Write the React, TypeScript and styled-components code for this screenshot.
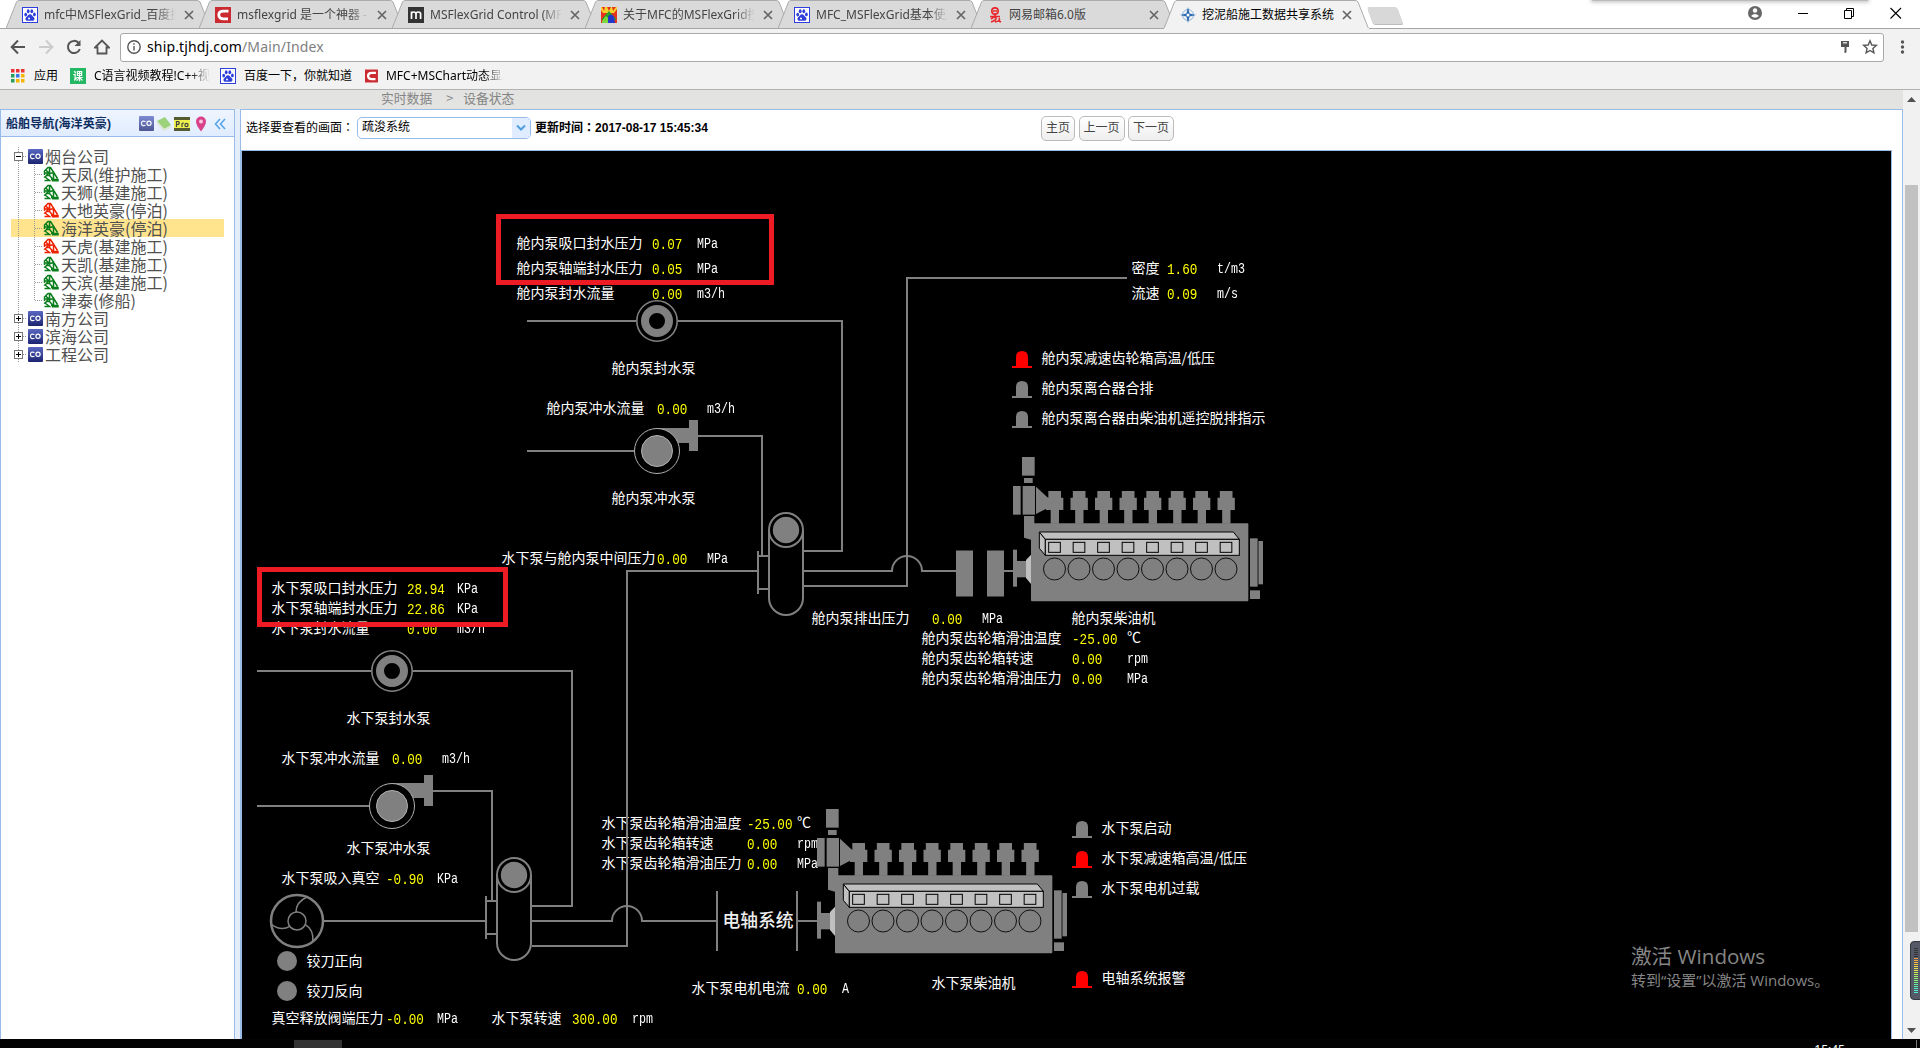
import React from "react";
import styled, { createGlobalStyle } from "styled-components";

const UI = `"Noto Sans", "Noto Sans CJK SC", sans-serif`;
const CJK = `"Noto Sans CJK SC", sans-serif`;
const ARIAL = `"Liberation Sans", "Noto Sans CJK SC", sans-serif`;
const GREY = "#808080";
const EDGE = "#99bbe8";

const Global = createGlobalStyle`
  * { box-sizing: border-box; }
  html, body { margin: 0; background: #fff; overflow: hidden; }
`;

const Screen = styled.div`
  position: relative;
  display: flex;
  flex-direction: column;
  width: 1920px;
  height: 1048px;
  overflow: hidden;
  font-family: ${UI};
  background: #fff;
`;

/* ---------- browser chrome ---------- */

const TabStrip = styled.div`
  display: flex;
  height: 29px;
  padding-left: 6px;
  background: linear-gradient(#fff, #fff 28px, #a6a6a6 28px);
`;

const TabBox = styled.div<{ $active?: boolean }>`
  position: relative;
  flex: none;
  display: flex;
  align-items: center;
  width: 205px;
  height: 29px;
  margin-right: -12px;
  padding-left: 16px;
  z-index: ${(p) => (p.$active ? 2 : 1)};
`;

const TabShape = styled.svg`
  position: absolute;
  left: 0;
  top: 0;
`;

const TabIcon = styled.span`
  position: relative;
  display: flex;
  width: 16px;
  height: 16px;
  margin-right: 6px;
`;

const TabTitle = styled.span<{ $active?: boolean; $fade?: boolean }>`
  position: relative;
  width: 134px;
  overflow: hidden;
  white-space: nowrap;
  font-size: 12px;
  line-height: 18px;
  color: ${(p) => (p.$active ? "#000" : "#444")};
  ${(p) => p.$fade && "mask-image: linear-gradient(to right, #000 112px, transparent 132px);"}
`;

const TabClose = styled.svg`
  position: relative;
  margin-left: 6px;
`;

const NewTab = styled.div`
  align-self: flex-start;
  width: 30px;
  height: 17px;
  margin: 7px 0 0 13px;
  background: #d8d8d8;
  border-radius: 2px;
  transform: skewX(20deg);
  box-shadow: 0 1px 0 #bbb;
`;

const WindowButtons = styled.div`
  display: flex;
  align-items: center;
  justify-content: space-between;
  width: 155px;
  height: 26px;
  margin-left: auto;
  margin-right: 17px;
`;

const TopShadow = styled.div`
  position: absolute;
  left: 1592px;
  top: -6px;
  width: 276px;
  height: 7px;
  background: #bbb;
  box-shadow: 0 0 4px 1px #bbb;
`;

const Toolbar = styled.div`
  display: flex;
  align-items: center;
  height: 36px;
  padding: 0 11px 0 10px;
  background: #f2f2f2;
`;

const NavIcons = styled.div`
  display: flex;
  gap: 12px;
  width: 110px;
`;

const Omnibox = styled.div`
  display: flex;
  align-items: center;
  width: 1764px;
  height: 29px;
  padding: 0 5px 0 6px;
  border: 1px solid #a9a9a9;
  border-radius: 3px;
  background: #fff;
`;

const Url = styled.span`
  flex: 1;
  margin-left: 6px;
  font-size: 14px;
  line-height: 20px;
  letter-spacing: 0.15px;
  color: #000;
`;

const UrlPath = styled.span`
  color: #808080;
`;

const OmniActions = styled.div`
  display: flex;
  gap: 9px;
`;

const MenuDots = styled.svg`
  margin-left: 16px;
`;

const Bookmarks = styled.div`
  display: flex;
  align-items: center;
  height: 25px;
  padding: 0 0 3px 10px;
  background: #f2f2f2;
  border-bottom: 1px solid #b2b2b2;
`;

const Bookmark = styled.div<{ $w: number; $fade?: boolean }>`
  display: flex;
  align-items: center;
  gap: 8px;
  width: ${(p) => p.$w}px;
  overflow: hidden;
  white-space: nowrap;
  font-size: 12px;
  line-height: 18px;
  color: #000;
  ${(p) => p.$fade && `mask-image: linear-gradient(to right, #000 ${p.$w - 30}px, transparent ${p.$w - 10}px);`}
`;

const GreenTile = styled.span`
  width: 16px;
  height: 16px;
  flex: none;
  background: #25b864;
  color: #fff;
  font: bold 10px/15px ${CJK};
  text-align: center;
`;

/* ---------- page ---------- */

const Page = styled.div`
  display: flex;
  height: 949px;
`;

const Site = styled.div`
  display: flex;
  flex-direction: column;
  width: 1903px;
`;

const Crumbs = styled.div`
  display: flex;
  height: 19px;
  padding-left: 381px;
  background: #e3e3e1;
  font: 12.8px/16px ${CJK};
  color: #858585;
`;

const CrumbArrow = styled.span`
  width: 31px;
  padding-left: 4px;
  text-align: center;
`;

const Columns = styled.div`
  display: flex;
  gap: 5px;
  flex: 1;
  background: #e4edfa;
`;

const Sidebar = styled.div`
  width: 235px;
  border: 1px solid ${EDGE};
  border-bottom: 0;
  background: #fff;
`;

const SideHead = styled.div`
  display: flex;
  align-items: center;
  height: 27px;
  padding: 2px 7px 0 5px;
  border-bottom: 1px solid ${EDGE};
  background: linear-gradient(#eff5ff, #e0ecff);
  font: bold 12px/18px ${ARIAL};
  letter-spacing: 0.1px;
  color: #0e2d5f;
`;

const SideTools = styled.div`
  display: flex;
  gap: 2px;
  margin-left: auto;
`;

const Tree = styled.div`
  padding: 10px 10px 0 10px;
`;

const TreeRow = styled.div<{ $on?: boolean }>`
  display: flex;
  align-items: center;
  height: 18px;
  background: ${(p) => (p.$on ? "#ffe48d" : "transparent")};
  font: 16px/18px ${CJK};
  color: #505050;
  white-space: nowrap;
`;

const TreeText = styled.span`
  margin-left: 2px;
  padding-bottom: 1px;
`;

const Work = styled.div`
  display: flex;
  flex-direction: column;
  width: 1663px;
  border: 1px solid ${EDGE};
  border-bottom: 0;
  background: #fff;
`;

const Controls = styled.div`
  display: flex;
  align-items: center;
  height: 40px;
  padding: 0 0 4px 5px;
  font: 12px/18px ${ARIAL};
  color: #000;
`;

const Prompt = styled.span`
  padding-bottom: 2px;
`;

const Colon = styled.span`
  font-family: "Noto Sans CJK TC", sans-serif;
`;

const Select = styled.div`
  display: flex;
  justify-content: space-between;
  width: 174px;
  height: 22px;
  margin: 0 4px 0 3px;
  padding-left: 4px;
  border: 1px solid ${EDGE};
  border-radius: 5px;
  overflow: hidden;
  line-height: 18px;
`;

const SelectArrow = styled.span`
  display: flex;
  align-items: center;
  justify-content: center;
  width: 18px;
  background: #e0ecff;
`;

const Updated = styled.strong`
  width: 506px;
  padding-bottom: 2px;
  white-space: nowrap;
`;

const PageButton = styled.button<{ $w: number }>`
  width: ${(p) => p.$w}px;
  height: 25px;
  margin-right: 3.5px;
  padding: 0 0 2px;
  border: 1px solid #bbb;
  border-radius: 5px;
  background: linear-gradient(#fff, #eee);
  font: 12px/20px ${CJK};
  color: #444;
`;

const Canvas = styled.div`
  position: relative;
  width: 1651px;
  height: 889px;
  border-left: 1px solid ${EDGE};
  border-right: 1px solid ${EDGE};
  border-top: 1px solid ${EDGE};
  background: #000;
  overflow: hidden;
`;

const Drawing = styled.svg`
  position: absolute;
  left: 0;
  top: 0;
`;

const Label = styled.span<{ $x: number; $y: number }>`
  position: absolute;
  left: ${(p) => p.$x - 241.5}px;
  top: ${(p) => p.$y - 162}px;
  font: 14px/20px ${CJK};
  color: #fff;
  white-space: pre;
`;

const Unit = styled(Label)<{ $wide?: boolean }>`
  font: 14px/20px "Liberation Mono", "Noto Sans CJK SC", monospace;
  transform: scaleX(${(p) => (p.$wide ? 1 : 0.8333)});
  transform-origin: 0 0;
`;

const Value = styled(Label)`
  font: 15.5px/20px "Liberation Mono", monospace;
  transform: scaleX(0.815);
  transform-origin: 0 0;
  color: #ff0;
`;

const ShaftLabel = styled(Label)`
  font-size: 17.8px;
  font-weight: 500;
  color: #eee;
`;

const Marker = styled.div<{ $x: number; $y: number; $w: number; $h: number }>`
  position: absolute;
  left: ${(p) => p.$x - 242}px;
  top: ${(p) => p.$y - 151}px;
  width: ${(p) => p.$w}px;
  height: ${(p) => p.$h}px;
  border: 5px solid #ed1c24;
`;

const Watermark = styled.div`
  position: absolute;
  left: 1389px;
  top: 792px;
  color: #868686;
  font-family: "Open Sans", "Noto Sans CJK SC", sans-serif;
  white-space: nowrap;
`;

const WatermarkTitle = styled.div`
  font-size: 20.6px;
  line-height: 27px;
`;

const WatermarkText = styled.div`
  font-size: 15px;
  line-height: 21px;
`;

const Scrollbar = styled.div`
  display: flex;
  flex-direction: column;
  align-items: center;
  width: 17px;
  background: #f1f1f1;
`;

const ScrollArrow = styled.svg`
  flex: none;
  margin-top: 7px;
`;

const ScrollThumb = styled.div`
  flex: none;
  width: 13px;
  height: 747px;
  margin: 83px 0 89px;
  background: #c1c1c1;
`;

const Gauge = styled.div`
  position: absolute;
  left: 1910px;
  top: 941px;
  display: flex;
  flex-direction: column;
  gap: 1px;
  width: 14px;
  height: 59px;
  padding: 6px 0 0 3px;
  border: 1px solid #33353f;
  border-radius: 4px;
  background: #545867;
`;

const GaugeBar = styled.span<{ $c: string }>`
  width: 4px;
  height: 1px;
  background: ${(p) => p.$c};
`;

const Taskbar = styled.div`
  display: flex;
  height: 9px;
  padding: 1px 3px 0 294px;
  overflow: hidden;
  background: #030303;
`;

const TaskItem = styled.div`
  width: 48px;
  background: #333;
`;

const Clock = styled.div`
  margin: 2px 71px 0 auto;
  font: 12px/16px "Noto Sans", sans-serif;
  color: #fff;
`;

const ShowDesktop = styled.div`
  width: 1px;
  background: #777;
`;

/* ---------- icons ---------- */

const Paw = () => (
  <svg width="16" height="16" viewBox="0 0 16 16">
    <rect x=".5" y=".5" width="15" height="15" fill="#fff" stroke="#2f3fdc" />
    <g fill="#2f3fdc">
      <ellipse cx="3.7" cy="7.6" rx="1.4" ry="1.9" />
      <ellipse cx="6.2" cy="4.2" rx="1.4" ry="2" />
      <ellipse cx="9.8" cy="4.2" rx="1.4" ry="2" />
      <ellipse cx="12.4" cy="7.4" rx="1.4" ry="1.9" />
      <path d="M8 7.2c1.8 0 2.6 2 3.8 3.1 1.5 1.5.5 3.7-1.6 3.5-1.5-.2-2.9-.2-4.4 0-2.2.2-3.1-2-1.6-3.5C5.4 9.200 6.200 7.200 8 7.200z" />
    </g>
    <circle cx="7" cy="11.600" r="1" fill="#fff" />
  </svg>
);

const CIcon = () => (
  <svg width="16" height="16" viewBox="0 0 16 16">
    <rect width="16" height="16" fill="#ca2a30" />
    <path d="M13.500 4.200H8.500Q3.800 4.200 3.800 8T8.500 11.800H13" fill="none" stroke="#fff" strokeWidth="2.800" />
  </svg>
);

const MIcon = () => (
  <svg width="16" height="16" viewBox="0 0 16 16">
    <rect width="16" height="16" fill="#333" />
    <path d="M3.500 12V4.500M3.500 7Q3.500 5 5.700 5T8 7V12M8 7Q8 5 10.300 5T12.600 7V12" fill="none" stroke="#fff" strokeWidth="1.700" />
  </svg>
);

const HouseIcon = () => (
  <svg width="16" height="16" viewBox="0 0 16 16">
    <rect width="16" height="16" fill="#e8321e" />
    <path d="M0 0h1l2 4 1-4h2l2 4 2-4h1l1 4 3-4h1v2l-3 4H2L0 3z" fill="#f6d32d" />
    <path d="M1 12l7-8 7 8v1H1z" fill="#28a428" />
    <path d="M7 9.500q3-4 6 0l1 6.500H7z" fill="#2436c8" />
    <path d="M1 14l4-5 2 2v5H1z" fill="#7ada3a" />
  </svg>
);

const MailIcon = () => (
  <svg width="16" height="16" viewBox="0 0 16 16" fill="none" stroke="#e8282c" strokeWidth="1.700">
    <circle cx="8" cy="4" r="3.200" />
    <path d="M6 4h4M8 7v2M3 9.500h10M4 12q4-3 5-1t-5 4M8 15q6-1 4-4M12 14l2 1" />
  </svg>
);

const StarIcon = () => (
  <svg width="16" height="16" viewBox="0 0 16 16">
    <circle cx="8" cy="8" r="5.500" fill="none" stroke="#8db3dc" />
    <path d="M8 0l1.600 6.400L16 8 9.600 9.600 8 16 6.400 9.600 0 8l6.400-1.600z" fill="#2c6bb0" />
    <circle cx="8" cy="8" r="1.500" fill="#fff" />
  </svg>
);

const CoIcon = ({ faded }: { faded?: boolean }) => (
  <svg width="15" height="15" viewBox="0 0 15 15" opacity={faded ? 0.75 : 1}>
    <defs>
      <linearGradient id="co" x2="0" y2="1">
        <stop stopColor="#5a68c4" />
        <stop offset="1" stopColor="#1c2470" />
      </linearGradient>
    </defs>
    <rect width="15" height="15" rx="1" fill="url(#co)" />
    <path d="M6.500 5.500Q2.500 4 2.500 7.300T6.500 9.200" fill="none" stroke="#fff" strokeWidth="1.200" />
    <circle cx="10" cy="7.300" r="2.100" fill="none" stroke="#fff" strokeWidth="1.200" />
  </svg>
);

const ShipIcon = ({ color }: { color: string }) => (
  <svg width="16" height="16" viewBox="0 0 16 16" fill="none" stroke={color} strokeWidth="1.500">
    <path d="M1.500 9V5L5 1.500H7.500L14.500 12.500M6.500 2V9.500L10 13.500M1.500 7H5.500L7 4.500M3 4L5.500 7L3 10M7 7.500L10.500 6.500V13M1 11.500L4 9.500H7M2 11L6.500 14.500H1.500M8 13.500H15V14.800H9" />
  </svg>
);

const Toggle = ({ open }: { open?: boolean }) => (
  <svg width="17" height="18" viewBox="0 0 17 18" stroke="#555">
    <path d="M7.500 0V18" strokeDasharray="1 1" stroke="#999" />
    <path d="M12 9.500H16" strokeDasharray="1 1" stroke="#999" />
    <rect x="3.500" y="5.500" width="8" height="8" fill="#fff" stroke="#777" />
    <path d={open ? "M5 9.500H10" : "M5 9.500H10M7.500 7V12"} stroke="#000" />
  </svg>
);

const Branch = ({ last }: { last?: boolean }) => (
  <svg width="32" height="18" viewBox="0 0 32 18" stroke="#999" strokeDasharray="1 1">
    <path d="M7.500 0V18" />
    <path d={last ? "M23.500 0V9.500" : "M23.500 0V18"} />
    <path d="M24 9.500H32" />
  </svg>
);

/* ---------- diagram parts ---------- */

const cylinders = [0, 1, 2, 3, 4, 5, 6, 7];

const Engine = ({ x, y }: { x: number; y: number }) => (
  <g transform={`translate(${x} ${y}) scale(.33333)`} fill={GREY}>
    <rect x="126" y="651" width="38" height="56" />
    <rect x="132" y="714" width="26" height="15" />
    <rect x="99" y="738" width="23" height="86" />
    <rect x="128" y="738" width="37" height="86" />
    <path d="M168 740L207 776V802L168 822z" />
    <path d="M132 828H163V902L132 893z" />
    <rect x="153" y="850" width="652" height="234" rx="3" />
    {cylinders.map((i) => (
      <path key={i} transform={`translate(${i * 73.500} 0)`} d="M205 753H243V773H250V810H237V851H212V810H198V773H205z" />
    ))}
    <g fill="#c0c0c0" stroke="#000" strokeWidth="3">
      <path d="M178 876L196 898V946L178 925z" />
      <path d="M178 876H760L778 898H196z" />
      <rect x="196" y="898" width="582" height="48" />
      {cylinders.map((i) => (
        <rect key={i} x={206 + i * 73.500} y="907" width="35" height="30" />
      ))}
    </g>
    <g fill="none" stroke="#111" strokeWidth="3">
      {cylinders.map((i) => (
        <circle key={i} cx={223.500 + i * 73.500} cy="987" r="33" />
      ))}
    </g>
    <rect x="810" y="895" width="23" height="145" />
    <rect x="833" y="903" width="3" height="130" fill="#444" />
    <rect x="836" y="903" width="13" height="130" />
    <rect x="810" y="1051" width="30" height="26" />
    <rect x="99" y="929" width="12" height="111" />
    <rect x="111" y="963" width="28" height="49" />
    <path d="M138 960L153 944V1032L138 1014z" fill="#c0c0c0" />
  </g>
);

const SealPump = ({ x, y }: { x: number; y: number }) => (
  <g fill="none" stroke={GREY}>
    <circle cx={x} cy={y} r="20.200" strokeWidth="1.600" />
    <circle cx={x} cy={y} r="12" strokeWidth="8" />
  </g>
);

const FlushPump = ({ x, y }: { x: number; y: number }) => (
  <g transform={`translate(${x} ${y})`}>
    <path d="M0-23H32V-31H41V0H32V-8H20z" fill={GREY} />
    <circle r="22.500" fill="#000" stroke="#b0b0b0" />
    <circle r="15.500" fill={GREY} stroke="#b0b0b0" />
  </g>
);

const MainPump = ({ x, y }: { x: number; y: number }) => (
  <g transform={`translate(${x} ${y})`} fill="none" stroke={GREY} strokeWidth="2">
    <circle r="17" />
    <circle r="13.200" fill={GREY} stroke="none" />
    <path d="M-17 0V68A17 17 0 0 0 17 68V0M-28 21V64M-28 26H-17M-28 59H-17" />
  </g>
);

const Lamp = ({ x, y, on }: { x: number; y: number; on?: boolean }) => (
  <path
    transform={`translate(${x} ${y})`}
    d="M0 17V15H4V6Q4 0 10 0T16 6V15H20V17z"
    fill={on ? "#f00" : GREY}
  />
);

const Cutter = () => (
  <g transform="translate(297 921)" fill="none" stroke={GREY} strokeWidth="1.500">
    <circle r="26" strokeWidth="2.500" />
    <circle r="9" />
    {[0, 120, 240].map((a) => (
      <path key={a} transform={`rotate(${a})`} d="M-1-9Q-1-19 10-24" />
    ))}
  </g>
);

type Row = { name: string; x: number; y: number; value: string; vx: number; unit: string; ux: number };

const readings: Row[] = [
  { name: "舱内泵吸口封水压力", x: 516, y: 243, value: "0.07", vx: 651.500, unit: "MPa", ux: 696.500 },
  { name: "舱内泵轴端封水压力", x: 516, y: 268, value: "0.05", vx: 651.500, unit: "MPa", ux: 696.500 },
  { name: "舱内泵封水流量", x: 516, y: 293, value: "0.00", vx: 651.500, unit: "m3/h", ux: 696.500 },
  { name: "舱内泵冲水流量", x: 546, y: 408, value: "0.00", vx: 656.500, unit: "m3/h", ux: 706.500 },
  { name: "密度", x: 1131, y: 268, value: "1.60", vx: 1166.500, unit: "t/m3", ux: 1216.500 },
  { name: "流速", x: 1131, y: 293, value: "0.09", vx: 1166.500, unit: "m/s", ux: 1216.500 },
  { name: "水下泵与舱内泵中间压力", x: 501, y: 558, value: "0.00", vx: 656.500, unit: "MPa", ux: 706.500 },
  { name: "舱内泵排出压力", x: 811, y: 618, value: "0.00", vx: 931.500, unit: "MPa", ux: 981.500 },
  { name: "舱内泵齿轮箱滑油温度", x: 921, y: 638, value: "-25.00", vx: 1071, unit: "℃", ux: 1126.500 },
  { name: "舱内泵齿轮箱转速", x: 921, y: 658, value: "0.00", vx: 1071.500, unit: "rpm", ux: 1126.500 },
  { name: "舱内泵齿轮箱滑油压力", x: 921, y: 678, value: "0.00", vx: 1071.500, unit: "MPa", ux: 1126.500 },
  { name: "水下泵吸口封水压力", x: 271, y: 588, value: "28.94", vx: 406.500, unit: "KPa", ux: 456.500 },
  { name: "水下泵轴端封水压力", x: 271, y: 608, value: "22.86", vx: 406.500, unit: "KPa", ux: 456.500 },
  { name: "水下泵封水流量", x: 271, y: 628, value: "0.00", vx: 406.500, unit: "m3/h", ux: 456.500 },
  { name: "水下泵冲水流量", x: 281, y: 758, value: "0.00", vx: 391.500, unit: "m3/h", ux: 441.500 },
  { name: "水下泵吸入真空", x: 281, y: 878, value: "-0.90", vx: 385.500, unit: "KPa", ux: 436.500 },
  { name: "真空释放阀端压力", x: 271, y: 1018, value: "-0.00", vx: 385.500, unit: "MPa", ux: 436.500 },
  { name: "水下泵转速", x: 491, y: 1018, value: "300.00", vx: 571.500, unit: "rpm", ux: 631.500 },
  { name: "水下泵齿轮箱滑油温度", x: 601, y: 823, value: "-25.00", vx: 746, unit: "℃", ux: 796.500 },
  { name: "水下泵齿轮箱转速", x: 601, y: 843, value: "0.00", vx: 746.500, unit: "rpm", ux: 796.500 },
  { name: "水下泵齿轮箱滑油压力", x: 601, y: 863, value: "0.00", vx: 746.500, unit: "MPa", ux: 796.500 },
  { name: "水下泵电机电流", x: 691, y: 988, value: "0.00", vx: 796.500, unit: "A", ux: 841.500 },
];

const captions: [string, number, number][] = [
  ["舱内泵封水泵", 611, 368],
  ["舱内泵冲水泵", 611, 498],
  ["舱内泵柴油机", 1071, 618],
  ["水下泵封水泵", 346, 718],
  ["水下泵冲水泵", 346, 848],
  ["水下泵柴油机", 931, 983],
  ["铰刀正向", 306, 961],
  ["铰刀反向", 306, 991],
];

const alarms: { text: string; x: number; y: number; on?: boolean }[] = [
  { text: "舱内泵减速齿轮箱高温/低压", x: 1012, y: 351, on: true },
  { text: "舱内泵离合器合排", x: 1012, y: 381 },
  { text: "舱内泵离合器由柴油机遥控脱排指示", x: 1012, y: 411 },
  { text: "水下泵启动", x: 1072, y: 821 },
  { text: "水下泵减速箱高温/低压", x: 1072, y: 851, on: true },
  { text: "水下泵电机过载", x: 1072, y: 881 },
  { text: "电轴系统报警", x: 1072, y: 971, on: true },
];

const Diagram = () => (
  <Canvas>
    {readings.map((r) => (
      <React.Fragment key={r.name}>
        <Label $x={r.x} $y={r.y}>{r.name}</Label>
        <Value $x={r.vx} $y={r.y + 3}>{r.value}</Value>
        <Unit $x={r.ux} $y={r.unit === "℃" ? r.y + 1 : r.y + 2} $wide={r.unit === "℃"}>{r.unit}</Unit>
      </React.Fragment>
    ))}
    {captions.map(([text, x, y]) => (
      <Label key={text} $x={x} $y={y}>{text}</Label>
    ))}
    {alarms.map((a) => (
      <Label key={a.text} $x={a.x + 29} $y={a.y + 7}>{a.text}</Label>
    ))}
    <ShaftLabel $x={722} $y={920}>电轴系统</ShaftLabel>
    <Drawing width="1649" height="888" viewBox="242 151 1649 888">
      <g fill="none" stroke={GREY} strokeWidth="2">
        <path d="M527 321H636M678 321H842V551H804" />
        <path d="M527 451H634M698 436H762V556" />
        <path d="M1127 278H907V586H804" />
        <path d="M804 571H892A15 15 0 0 1 922 571H956M1004 571H1013" />
        <path d="M758 571H627V946H532" />
        <path d="M257 671H371M413 671H572V906H532" />
        <path d="M257 806H369M433 791H492V901" />
        <path d="M324 921H486M532 921H612A15 15 0 0 1 642 921H717M717 891V951M797 891V951M797 921H817" />
      </g>
      <rect x="956" y="550.500" width="17" height="46" fill={GREY} />
      <rect x="987" y="550.500" width="17" height="46" fill={GREY} />
      <SealPump x={657} y={321} />
      <SealPump x={392} y={671} />
      <FlushPump x={657} y={451} />
      <FlushPump x={392} y={806} />
      <MainPump x={786} y={530} />
      <MainPump x={514} y={875} />
      <Engine x={980} y={240} />
      <Engine x={784} y={592} />
      <Cutter />
      <circle cx="287" cy="961" r="10" fill={GREY} />
      <circle cx="287" cy="991" r="10" fill={GREY} />
      {alarms.map((a) => (
        <Lamp key={a.text} x={a.x} y={a.y} on={a.on} />
      ))}
    </Drawing>
    <Marker $x={496} $y={214} $w={278} $h={71} />
    <Marker $x={257} $y={567} $w={251} $h={60} />
    <Watermark>
      <WatermarkTitle>激活 Windows</WatermarkTitle>
      <WatermarkText>转到“设置”以激活 Windows。</WatermarkText>
    </Watermark>
  </Canvas>
);

const tabs = [
  { title: "mfc中MSFlexGrid_百度搜", icon: <Paw />, fade: true },
  { title: "msflexgrid 是一个神器 - ", icon: <CIcon />, fade: true },
  { title: "MSFlexGrid Control (MFC", icon: <MIcon />, fade: true },
  { title: "关于MFC的MSFlexGrid控", icon: <HouseIcon />, fade: true },
  { title: "MFC_MSFlexGrid基本使用", icon: <Paw />, fade: true },
  { title: "网易邮箱6.0版", icon: <MailIcon /> },
  { title: "挖泥船施工数据共享系统", icon: <StarIcon />, active: true },
];

const ships: [string, string, boolean?][] = [
  ["天凤(维护施工)", "#0a7d1c"],
  ["天狮(基建施工)", "#0a7d1c"],
  ["大地英豪(停泊)", "#ee2200"],
  ["海洋英豪(停泊)", "#0a7d1c", true],
  ["天虎(基建施工)", "#ee2200"],
  ["天凯(基建施工)", "#0a7d1c"],
  ["天滨(基建施工)", "#0a7d1c"],
  ["津泰(修船)", "#0a7d1c"],
];

const gaugeColors = [
  "#333", "#333", "#333", "#333", "#333", "#f0a040", "#f0a840", "#f0b840", "#f0c840", "#e8d848", "#e8e050", "#e0e850",
  "#d0f050", "#b8f060", "#a8f068", "#98f070", "#88f078", "#70f088", "#60f098", "#58f0b0", "#50f0c0", "#50f0d0", "#50f0d8",
];

export default function App() {
  return (
    <Screen>
      <Global />
      <TabStrip>
        {tabs.map((t) => (
          <TabBox key={t.title} $active={t.active}>
            <TabShape width="205" height="29" viewBox="0 0 205 29">
              <path
                d="M0 28.500L10.500 2Q11.500.5 13 .5H191Q193 .5 194 2L204.500 28.500"
                fill={t.active ? "#f2f2f2" : "#dadada"}
                stroke="#ababab"
              />
              {t.active ? <path d="M0 28.500H205" stroke="#f2f2f2" /> : <path d="M0 28.500H205" stroke="#a6a6a6" />}
            </TabShape>
            <TabIcon>{t.icon}</TabIcon>
            <TabTitle $active={t.active} $fade={t.fade}>{t.title}</TabTitle>
            <TabClose width="10" height="10" viewBox="0 0 10 10" stroke="#666" strokeWidth="1.700">
              <path d="M1 1L9 9M9 1L1 9" />
            </TabClose>
          </TabBox>
        ))}
        <NewTab />
        <WindowButtons>
          <svg width="14" height="14" viewBox="0 0 14 14">
            <circle cx="7" cy="7" r="7" fill="#666" />
            <circle cx="7" cy="4.500" r="2.200" fill="#fff" />
            <path d="M3 10q4-4 8 0q-4 3.500-8 0" fill="#fff" />
          </svg>
          <svg width="14" height="14" viewBox="0 0 14 14"><path d="M3 7.500H13" stroke="#000" /></svg>
          <svg width="14" height="14" viewBox="0 0 14 14" fill="none" stroke="#000">
            <path d="M2.500 4.500H9.500V12.500H2.500zM4.500 4V2.500H11.500V10.500H10" />
          </svg>
          <svg width="14" height="14" viewBox="0 0 14 14" stroke="#000" strokeWidth="1.100">
            <path d="M1.500 2L12 12.500M12 2L1.500 12.500" />
          </svg>
        </WindowButtons>
      </TabStrip>
      <TopShadow />
      <Toolbar>
        <NavIcons>
          <svg width="16" height="16" viewBox="0 0 16 16" fill="none" stroke="#555" strokeWidth="2"><path d="M15 8H2.500M8 1.500L1.700 8 8 14.500" /></svg>
          <svg width="16" height="16" viewBox="0 0 16 16" fill="none" stroke="#ccc" strokeWidth="2"><path d="M1 8H13.500M8 1.500L14.300 8 8 14.500" /></svg>
          <svg width="16" height="16" viewBox="0 0 16 16" fill="none" stroke="#555" strokeWidth="2"><path d="M13.800 10A6.100 6.100 0 1 1 12.500 3.800" /><path d="M14.500 1V7H8.500z" fill="#555" stroke="none" /></svg>
          <svg width="16" height="16" viewBox="0 0 16 16" fill="none" stroke="#555" strokeWidth="1.800"><path d="M1 8.500L8 1.500 15 8.500H12.500V14.500H3.500V8.500z" /></svg>
        </NavIcons>
        <Omnibox>
          <svg width="14" height="14" viewBox="0 0 14 14" fill="none" stroke="#555" strokeWidth="1.400"><circle cx="7" cy="7" r="6.200" /><path d="M7 6V10.500M7 3.300V4.800" /></svg>
          <Url>ship.tjhdj.com<UrlPath>/Main/Index</UrlPath></Url>
          <OmniActions>
            <svg width="16" height="16" viewBox="0 0 16 16"><path d="M4 2h8v6H9.500V13L8.500 14H7.500V8H4z" fill="#555" /><path d="M6 3.800H10" stroke="#fff" strokeWidth="1.200" /></svg>
            <svg width="16" height="16" viewBox="0 0 16 16" fill="none" stroke="#555" strokeWidth="1.400"><path d="M8 1.800L9.800 6l4.500.4-3.400 3 1 4.400L8 11.500l-3.900 2.300 1-4.400-3.400-3L6.200 6z" /></svg>
          </OmniActions>
        </Omnibox>
        <MenuDots width="5" height="16" viewBox="0 0 5 16" fill="#555"><circle cx="2.500" cy="3" r="1.700" /><circle cx="2.500" cy="8" r="1.700" /><circle cx="2.500" cy="13" r="1.700" /></MenuDots>
      </Toolbar>
      <Bookmarks>
        <Bookmark $w={60}>
          <svg width="16" height="16" viewBox="0 0 16 16">
            {["#e33", "#e33", "#e33", "#2a9d58", "#3b78e7", "#f4b400", "#2a9d58", "#f4b400", "#f4b400"].map((c, i) => (
              <rect key={i} x={1 + (i % 3) * 5} y={1 + Math.floor(i / 3) * 5} width="3.500" height="3.500" fill={c} />
            ))}
          </svg>
          应用
        </Bookmark>
        <Bookmark $w={150} $fade><GreenTile>课</GreenTile>C语言视频教程!C++视频</Bookmark>
        <Bookmark $w={145}><Paw />百度一下，你就知道</Bookmark>
        <Bookmark $w={149} $fade><CIcon />MFC+MSChart动态显示</Bookmark>
      </Bookmarks>
      <Page>
        <Site>
          <Crumbs>实时数据<CrumbArrow>&gt;</CrumbArrow>设备状态</Crumbs>
          <Columns>
            <Sidebar>
              <SideHead>
                船舶导航(海洋英豪)
                <SideTools>
                  <CoIcon faded />
                  <svg width="16" height="16" viewBox="0 0 16 16"><path d="M1 5L9 1 15 9 8 14z" fill="#9bd27a" /><path d="M1 6.500L8 14 15 10.500" fill="none" stroke="#dfe8da" strokeWidth="2" /></svg>
                  <svg width="16" height="16" viewBox="0 0 16 16"><rect y="1" width="16" height="14" fill="#555a30" /><rect y="4" width="16" height="8" fill="#eef04c" /><path d="M2.500 11V5.500H4.500Q6 7 4.500 8.500H2.500M8 11V7.500Q8 7 10 7" fill="none" stroke="#444" strokeWidth="1.200" /><circle cx="12.500" cy="9" r="1.600" fill="none" stroke="#444" strokeWidth="1.200" /></svg>
                  <svg width="17" height="16" viewBox="0 0 17 16"><path d="M9 15.500Q4 9 4 5.500A5 5 0 0 1 14 5.500Q14 9 9 15.500z" fill="#d9418a" /><circle cx="9" cy="5.500" r="2" fill="#f7c7de" /></svg>
                  <svg width="16" height="16" viewBox="0 0 16 16" fill="none" stroke="#56a5e8" strokeWidth="1.600"><path d="M9 3L4.500 8 9 13M14 3L9.500 8 14 13" /></svg>
                </SideTools>
              </SideHead>
              <Tree>
                <TreeRow><Toggle open /><CoIcon /><TreeText>烟台公司</TreeText></TreeRow>
                {ships.map(([name, color, on], i) => (
                  <TreeRow key={name} $on={on}>
                    <Branch last={i === ships.length - 1} />
                    <ShipIcon color={color} />
                    <TreeText>{name}</TreeText>
                  </TreeRow>
                ))}
                {["南方公司", "滨海公司", "工程公司"].map((n) => (
                  <TreeRow key={n}><Toggle /><CoIcon /><TreeText>{n}</TreeText></TreeRow>
                ))}
              </Tree>
            </Sidebar>
            <Work>
              <Controls>
                <Prompt>选择要查看的画面<Colon>：</Colon></Prompt>
                <Select>
                  疏浚系统
                  <SelectArrow><svg width="12" height="8" viewBox="0 0 12 8" fill="none" stroke="#4f9fe0" strokeWidth="2"><path d="M2 1.500L6 5.500 10 1.500" /></svg></SelectArrow>
                </Select>
                <Updated>更新时间<Colon>：</Colon>2017-08-17 15:45:34</Updated>
                <PageButton $w={34}>主页</PageButton>
                <PageButton $w={46}>上一页</PageButton>
                <PageButton $w={46}>下一页</PageButton>
              </Controls>
              <Diagram />
            </Work>
          </Columns>
        </Site>
        <Scrollbar>
          <ScrollArrow width="9" height="5" viewBox="0 0 9 5"><path d="M0 5L4.500 0 9 5z" fill="#505050" /></ScrollArrow>
          <ScrollThumb />
          <ScrollArrow width="9" height="5" viewBox="0 0 9 5"><path d="M0 0L4.500 5 9 0z" fill="#505050" /></ScrollArrow>
        </Scrollbar>
      </Page>
      <Taskbar>
        <TaskItem />
        <Clock>15:45</Clock>
        <ShowDesktop />
      </Taskbar>
      <Gauge>
        {gaugeColors.map((c, i) => (
          <GaugeBar key={i} $c={c} />
        ))}
      </Gauge>
    </Screen>
  );
}
